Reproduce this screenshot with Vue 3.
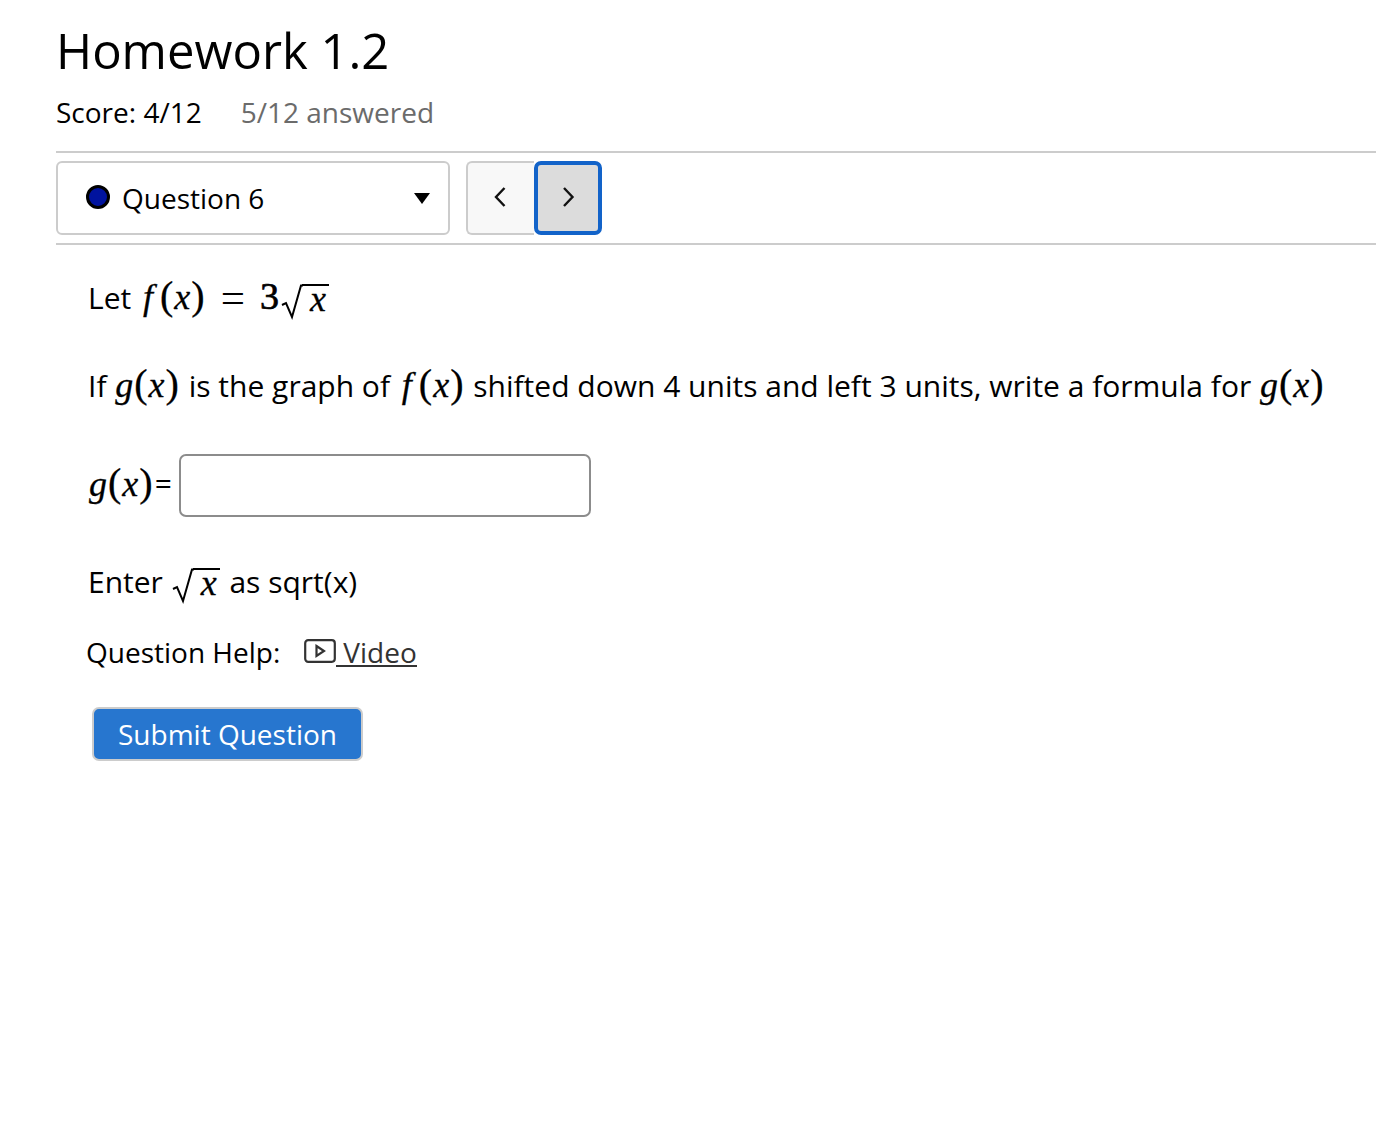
<script setup>
const helpLabel = 'Question Help:';
</script>

<template>
    <main class="page">
        <h1 class="title">Homework 1.2</h1>
        <div class="score-row">
            <span>Score: 4/12</span>
            <span class="answered">5/12 answered</span>
        </div>

        <nav class="question-nav">
            <div class="question-select">
                <span class="status-dot"></span>
                <span class="question-name">Question 6</span>
                <span class="caret"></span>
            </div>
            <div class="pager">
                <button class="pager-btn" type="button" aria-label="Previous">
                    <svg width="14" height="22" viewBox="0 0 14 22"><path d="M10.500 2 2 11l8.500 9" fill="none" stroke="#111" stroke-width="2.400" /></svg>
                </button>
                <button class="pager-btn is-focus" type="button" aria-label="Next">
                    <svg width="14" height="22" viewBox="0 0 14 22"><path d="M3 2l8.500 9L3 20" fill="none" stroke="#111" stroke-width="2.400" /></svg>
                </button>
            </div>
        </nav>

        <section class="question">
            <p class="line line-let">
                Let
                <span class="math"><i class="fn">f</i>(<i>x</i>)<span class="eq">=</span><span class="digit">3</span><span class="root"><svg class="root-sign" width="22" height="36" viewBox="0 0 22 36"><path d="M1 21l4-2 6 14L20 1.500h2" fill="none" stroke="#000" stroke-width="2" /></svg><i class="radicand">x</i></span></span>
            </p>
            <p class="line line-if">
                If <span class="math"><i>g</i>(<i>x</i>)</span> is the graph of <span class="math"><i class="fn">f</i>(<i>x</i>)</span> shifted down 4 units and left 3 units, write a formula for <span class="math"><i>g</i>(<i>x</i>)</span>
            </p>
            <div class="answer-row">
                <span class="math"><i>g</i>(<i>x</i>)</span><span class="equals">=</span>
                <input class="answer-input" type="text" />
            </div>
            <p class="line line-enter">
                Enter
                <span class="math"><span class="root root-enter"><svg class="root-sign" width="22" height="36" viewBox="0 0 22 36"><path d="M1 21l4-2 6 14L20 1.500h2" fill="none" stroke="#000" stroke-width="2" /></svg><i class="radicand">x</i></span></span>
                as sqrt(x)
            </p>
            <div class="help">
                <span class="help-label">{{ helpLabel }}</span>
                <a class="help-link" href="#">
                    <svg class="video-icon" width="32" height="25" viewBox="0 0 32 25">
                        <rect x="1.200" y="1.200" width="29.600" height="21.600" rx="3" fill="none" stroke="#333" stroke-width="2.200" />
                        <path d="M12.500 7l7.500 5-7.500 5z" fill="none" stroke="#333" stroke-width="2.200" />
                    </svg><span class="video-text">Video</span>
                </a>
            </div>
            <button class="submit" type="button">Submit Question</button>
        </section>
    </main>
</template>

<style>
html,
body {
    margin: 0;
    background: #fff;
}
</style>

<style scoped>
.page {
    box-sizing: border-box;
    min-height: 1127px;
    padding: 16px 0 0 56px;
    overflow: hidden;
    color: #000;
    font-family: "Open Sans", "Noto Sans", sans-serif;
    font-size: 28px;
}

.title {
    margin: 0;
    font-size: 49px;
    font-weight: 400;
    line-height: 68px;
}

.score-row {
    display: flex;
    gap: 39px;
    margin-top: 9px;
    line-height: 38px;
}

.answered {
    color: #6b6b6b;
}

.question-nav {
    display: flex;
    gap: 16px;
    margin-top: 20px;
    padding: 8px 0;
    border-top: 2px solid #ccc;
    border-bottom: 2px solid #ccc;
}

.question-select {
    display: flex;
    align-items: center;
    box-sizing: border-box;
    width: 394px;
    height: 74px;
    padding: 0 18px 0 28px;
    border: 2px solid #ccc;
    border-radius: 6px;
}

.status-dot {
    box-sizing: border-box;
    width: 24px;
    height: 24px;
    margin-top: -3px;
    border: 3px solid #000;
    border-radius: 50%;
    background: #00139e;
}

.question-name {
    flex: 1;
    margin-left: 12px;
}

.caret {
    width: 0;
    height: 0;
    margin-top: 1px;
    border-top: 11px solid #000;
    border-right: 8px solid transparent;
    border-left: 8px solid transparent;
}

.pager {
    display: flex;
}

.pager-btn {
    display: flex;
    align-items: center;
    justify-content: center;
    box-sizing: border-box;
    width: 68px;
    height: 74px;
    padding: 0 0 3px;
    border: 2px solid #ccc;
    border-right: 0;
    border-radius: 6px 0 0 6px;
    background: #f8f8f8;
}

.pager-btn.is-focus {
    border: 4px solid #1263c9;
    border-radius: 7px;
    background: #dcdcdc;
}

.question {
    padding-left: 32px;
    font-size: 30px;
}

.line {
    margin: 0;
}

.line-let {
    margin-top: 30px;
    line-height: 42px;
}

.line-if {
    margin-top: 43px;
    line-height: 42px;
    white-space: nowrap;
}

.math {
    margin: 0 1px;
    font-family: "Liberation Serif", "DejaVu Serif", serif;
    font-size: 40px;
    letter-spacing: 1px;
    -webkit-text-stroke: 0.300px #000;
}

.math i {
    font-size: 36px;
}

.math .fn {
    padding: 0 6px 0 3px;
}

.eq {
    margin: 0 14px 0 15px;
    font-size: 43px;
    vertical-align: -3px;
    -webkit-text-stroke: 0;
}

.digit {
    font-size: 38px;
    -webkit-text-stroke: 0.700px #000;
}

.root {
    display: inline-flex;
    align-items: flex-end;
    vertical-align: -11px;
    margin-left: 1px;
}

.root-sign {
    display: block;
}

.math .radicand {
    margin-left: -1px;
    padding: 0 2px 8px 8px;
    border-top: 2px solid #000;
    line-height: 26px;
}

.root-enter {
    margin: 0 1px 0 0;
}

.answer-row {
    display: flex;
    align-items: center;
    margin-top: 47px;
}

.answer-row .math,
.equals {
    margin-bottom: 6px;
}

.equals {
    margin-right: 7px;
}

.answer-input {
    box-sizing: border-box;
    width: 412px;
    height: 63px;
    border: 2px solid #8c8c8c;
    border-radius: 7px;
    background: #fff;
}

.line-enter {
    margin-top: 42px;
    line-height: 42px;
}

.help {
    display: flex;
    align-items: center;
    margin: 28px 0 0 -2px;
    font-size: 28px;
    line-height: 40px;
}

.help-label {
    margin: 0 24px 2px 0;
}

.help-link {
    display: flex;
    align-items: center;
    color: #333;
    text-decoration: none;
}

.video-icon {
    margin-top: -4px;
}

.video-text {
    padding-left: 7px;
    border-bottom: 2px solid #333;
    line-height: 26px;
}

.submit {
    display: block;
    box-sizing: border-box;
    width: 271px;
    height: 54px;
    margin: 33px 0 0 4px;
    padding: 0;
    border: 2px solid #ccc;
    border-radius: 7px;
    background: #2776cf;
    color: #fff;
    font-family: inherit;
    font-size: 28px;
}
</style>
